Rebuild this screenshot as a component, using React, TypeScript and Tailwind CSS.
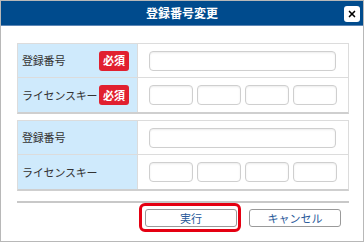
import { X } from "lucide-react";

const font = { fontFamily: '"Noto Sans CJK JP", "Liberation Sans", sans-serif' };

function Badge() {
    return (
        <span className="w-[30px] h-[20px] rounded-[3px] bg-[#e1202f] text-white text-[11px] font-bold flex items-center justify-center leading-none">
            必須
        </span>
    );
}

function Row({ label, required, quad, last }: { label: string; required?: boolean; quad?: boolean; last?: boolean }) {
    return (
        <div className={`grid grid-cols-[120px_1fr] h-[34px] ${last ? "" : "border-b border-[#dcdcdc]"}`}>
            <div className="bg-[#cfeafc] border-r border-[#dcdcdc] flex items-center justify-between pl-[4px] pr-[8px]">
                <span className="text-[11px] text-[#333] tracking-[-0.2px]">{label}</span>
                {required && <Badge />}
            </div>
            <div className="flex items-center pl-[11px] pr-[12px]">
                {quad ? (
                    <div className="flex gap-[4px]">
                        {[0, 1, 2, 3].map((i) => (
                            <div key={i} className="w-[44px] h-[20px] rounded-[4px] border border-[#cfcfcf] shadow-[inset_0_1px_2px_rgba(0,0,0,0.08)]" />
                        ))}
                    </div>
                ) : (
                    <div className="w-full h-[20px] rounded-[4px] border border-[#cfcfcf] shadow-[inset_0_1px_2px_rgba(0,0,0,0.08)]" />
                )}
            </div>
        </div>
    );
}

function Table({ required }: { required?: boolean }) {
    return (
        <div className="border border-[#dcdcdc] border-b-2 border-b-[#cfcfcf]">
            <Row label="登録番号" required={required} />
            <Row label="ライセンスキー" required={required} quad last />
        </div>
    );
}

export default function App() {
    return (
        <div style={font} className="w-[364px] h-[242px] bg-white border border-[#b8b8b8] flex flex-col">
            {/* Title bar */}
            <div className="relative h-[25px] bg-[#004b8d] border-b border-[#5d86b5] flex items-center justify-center">
                <span className="text-white text-[12px] font-bold">登録番号変更</span>
                <button className="absolute right-[3px] top-[5px] w-[16px] h-[16px] rounded-[3px] bg-white flex items-center justify-center">
                    <X className="w-[10px] h-[10px] text-black" strokeWidth={4} />
                </button>
            </div>

            <div className="pl-[16px] pr-[14px] pt-[17px] flex flex-col">
                <Table required />
                <div className="h-[6px]" />
                <Table />

                <div className="mt-[10px] h-[2px] bg-[#c8c8c8]" />

                {/* Actions */}
                <div className="flex justify-end gap-[12px] pr-[8px] mt-[6px]">
                    <div className="relative">
                        <button className="w-[92px] h-[18px] rounded-[3px] border border-[#9a9a9a] bg-white text-[11px] text-[#2a5a9a] flex items-center justify-center">
                            実行
                        </button>
                        <div className="absolute left-[-6px] right-[-4px] top-[-6px] bottom-[-5px] border-[3px] border-[#e50012] rounded-[6px]" />
                    </div>
                    <button className="w-[92px] h-[18px] rounded-[3px] border border-[#9a9a9a] bg-white text-[11px] text-[#2a5a9a] flex items-center justify-center">
                        キャンセル
                    </button>
                </div>
            </div>
        </div>
    );
}
